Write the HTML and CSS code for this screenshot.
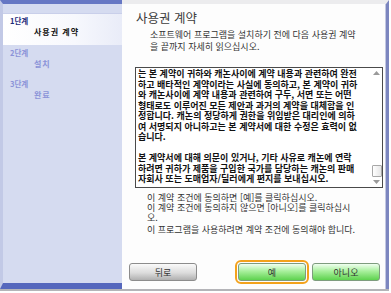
FILE: index.html
```html
<!DOCTYPE html>
<html lang="ko">
<head>
    <meta charset="UTF-8">
    <title>사용권 계약</title>
    <link rel="stylesheet" href="styles.css">
</head>
<body>

    <div class="window">

        <!-- Step list -->
        <div class="sidebar">
            <div class="step active">
                <div class="step-num">1단계</div>
                <div class="step-name">사용권 계약</div>
            </div>
            <div class="step">
                <div class="step-num">2단계</div>
                <div class="step-name">설치</div>
            </div>
            <div class="step">
                <div class="step-num">3단계</div>
                <div class="step-name">완료</div>
            </div>
        </div>

        <!-- Licence page -->
        <div class="main">
            <h2 class="title">사용권 계약</h2>
            <div class="intro">
                <div class="line">소프트웨어 프로그램을 설치하기 전에 다음 사용권 계약</div>
                <div class="line">을 끝까지 자세히 읽으십시오.</div>
            </div>

            <div class="licence">
                <div class="licence-text">
                    <div class="line">는 본 계약이 귀하와 캐논사이에 계약 내용과 관련하여 완전</div>
                    <div class="line">하고 배타적인 계약이라는 사실에 동의하고, 본 계약이 귀하</div>
                    <div class="line">와 캐논사이에 계약 내용과 관련하여 구두, 서면 또는 어떤</div>
                    <div class="line">형태로도 이루어진 모든 제안과 과거의 계약을 대체함을 인</div>
                    <div class="line">정합니다. 캐논의 정당하게 권한을 위임받은 대리인에 의하</div>
                    <div class="line">여 서명되지 아니하고는 본 계약서에 대한 수정은 효력이 없</div>
                    <div class="line">습니다.</div>
                    <div class="line"></div>
                    <div class="line">본 계약서에 대해 의문이 있거나, 기타 사유로 캐논에 연락</div>
                    <div class="line">하려면 귀하가 제품을 구입한 국가를 담당하는 캐논의 판매</div>
                    <div class="line">자회사 또는 도매업자/딜러에게 편지를 보내십시오.</div>
                </div>
                <div class="scrollbar">
                    <svg class="arrow" width="7" height="4" viewBox="0 0 7 4"><path d="M0 4 L3.5 0 L7 4 Z" fill="#9a9a9a"/></svg>
                    <div class="track"></div>
                    <div class="thumb"></div>
                    <svg class="arrow" width="7" height="4" viewBox="0 0 7 4"><path d="M0 0 L3.5 4 L7 0 Z" fill="#9a9a9a"/></svg>
                </div>
            </div>

            <div class="notes">
                <div class="para">
                    <div class="line">이 계약 조건에 동의하면 [예]를 클릭하십시오.</div>
                    <div class="line">이 계약 조건에 동의하지 않으면 [아니오]를 클릭하십시</div>
                    <div class="line">오.</div>
                </div>
                <div class="para">
                    <div class="line">이 프로그램을 사용하려면 계약 조건에 동의해야 합니다.</div>
                </div>
            </div>

            <div class="buttons">
                <button class="btn btn-gray">뒤로</button>
                <div class="btn-group">
                    <button class="btn btn-green focused">예</button>
                    <button class="btn btn-green">아니오</button>
                </div>
            </div>
        </div>

    </div>

</body>
</html>
```

FILE: styles.css
```css
/* Page */
body {
    margin: 0;
    background: #ffffff;
    font-family: "Noto Sans CJK KR", "Noto Sans", sans-serif;
    color: #333333;
}

/* Dialog frame */
.window {
    width: 389px;
    height: 289px;
    display: flex;
    border-bottom: 2px solid #b4b4b8;
}

/* Single text lines keep the tight spacing of the original dialog */
.line {
    white-space: nowrap;
}

/* Left step list */
.sidebar {
    width: 119px;
    background: #d5dbf0;
    border-left: 3px solid #c2c9e6;
    border-top: 4px solid #6677c4;
    border-bottom: 6px solid #5567bd;
    padding-top: 9px;
}

.step {
    padding: 3px 0 0 7px;
    margin-bottom: 6px;
}

.step.active {
    height: 29px;
    margin-bottom: 0;
    background: linear-gradient(to right, #ffffff, #f7f8fd 60%, #e9ecf8);
    border-top: 1px solid #c9cfea;
    padding-top: 2px;
}

.step-num {
    font-size: 7.5px;
    line-height: 9px;
    font-weight: bold;
    color: #8b93d8;
}

.step-name {
    padding-left: 24px;
    font-size: 8px;
    line-height: 13px;
    font-weight: bold;
    letter-spacing: 1px;
    color: #8b93d8;
}

.step.active .step-num {
    color: #1e2a7a;
}

.step.active .step-name {
    color: #111111;
}

/* Right page */
.main {
    flex: 1;
    display: flex;
    flex-direction: column;
    background: #fdfdfd;
    border-top: 4px solid #ececee;
    border-right: 3px solid #7c86bf;
    box-shadow: inset -1px 0 0 #c3c8e2;
}

.title {
    margin: 6px 0 0 14px;
    font-size: 12.5px;
    line-height: 16px;
    font-weight: normal;
    color: #3c3c3c;
}

.intro {
    margin: 3px 0 0 28px;
    font-size: 9px;
    color: #333333;
}

.intro .line {
    height: 12px;
    line-height: 12px;
}

/* Licence text box */
.licence {
    display: flex;
    width: 246px;
    height: 119px;
    margin: 14px 0 0 13px;
    border: 1px solid #4a4a4a;
    background: #ffffff;
}

.licence-text {
    flex: 1;
    padding: 1px 0 0 2px;
    font-size: 9px;
    font-weight: bold;
    color: #111111;
}

.licence-text .line {
    height: 10.5px;
    line-height: 10.5px;
}

.scrollbar {
    width: 11px;
    display: flex;
    flex-direction: column;
    align-items: center;
    background: #ffffff;
}

.scrollbar .arrow {
    margin: 3px 0;
}

.track {
    flex: 1;
}

.thumb {
    width: 8px;
    height: 10px;
    border: 1px solid #a8a8a8;
    border-radius: 1px;
    background: linear-gradient(to right, #ffffff, #e6e6e6);
}

/* Notes under the box */
.notes {
    margin: 5px 0 0 25px;
    font-size: 9px;
    color: #333333;
}

.notes .para {
    margin-bottom: 2px;
}

.notes .line {
    height: 10px;
    line-height: 10px;
}

/* Buttons */
.buttons {
    margin-top: auto;
    display: flex;
    padding: 0 6px 8px 7px;
}

.btn-group {
    margin-left: auto;
    display: flex;
    gap: 6px;
}

.btn {
    height: 18px;
    padding: 0;
    font-family: "Noto Sans CJK KR", sans-serif;
    font-size: 9px;
    color: #333333;
    border-radius: 3px;
    cursor: pointer;
}

.btn-gray {
    width: 68px;
    border: 1px solid #8c8c8c;
    background: linear-gradient(to bottom, #fafafa, #dcdcdc 55%, #b0b0b0);
}

.btn-green {
    width: 68px;
    border: 1px solid #7e9c7e;
    background: linear-gradient(to bottom, #f0fff0, #a8f09c 45%, #5ed24e);
}

.focused {
    outline: 2px solid #f3a21c;
    outline-offset: 1px;
}
```
